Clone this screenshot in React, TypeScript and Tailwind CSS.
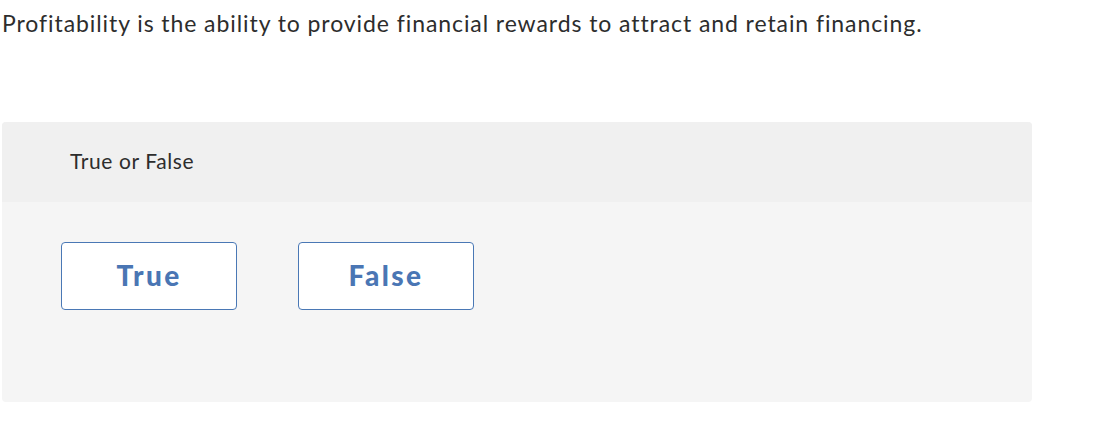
import React from "react";

export default function App() {
  return (
    <div className="w-[1114px] h-[444px] bg-white font-['Lato','Open_Sans',sans-serif] text-[#2d2d2d]">
      <p className="pl-[2px] pt-[9px] text-[23px] leading-[28px] tracking-[0.92px]">
        Profitability is the ability to provide financial rewards to attract and retain financing.
      </p>
      <div className="ml-[2px] mt-[85px] w-[1030px] h-[280px] rounded-[4px] overflow-hidden bg-[#f5f5f5] flex flex-col">
        <div className="h-[80px] bg-[#f0f0f0] pl-[68px] pt-[27px] text-[21px] leading-[24px] tracking-[0.6px]">
          True or False
        </div>
        <div className="flex gap-[61px] pl-[59px] pt-[40px]">
          <button className="w-[176px] h-[68px] pb-[2px] bg-white border border-[#4a78b5] rounded-[4px] text-[#4a76b4] font-black text-[28px] leading-[32px] tracking-[2.4px]">
            True
          </button>
          <button className="w-[176px] h-[68px] pb-[2px] bg-white border border-[#4a78b5] rounded-[4px] text-[#4a76b4] font-black text-[28px] leading-[32px] tracking-[2.4px]">
            False
          </button>
        </div>
      </div>
    </div>
  );
}
